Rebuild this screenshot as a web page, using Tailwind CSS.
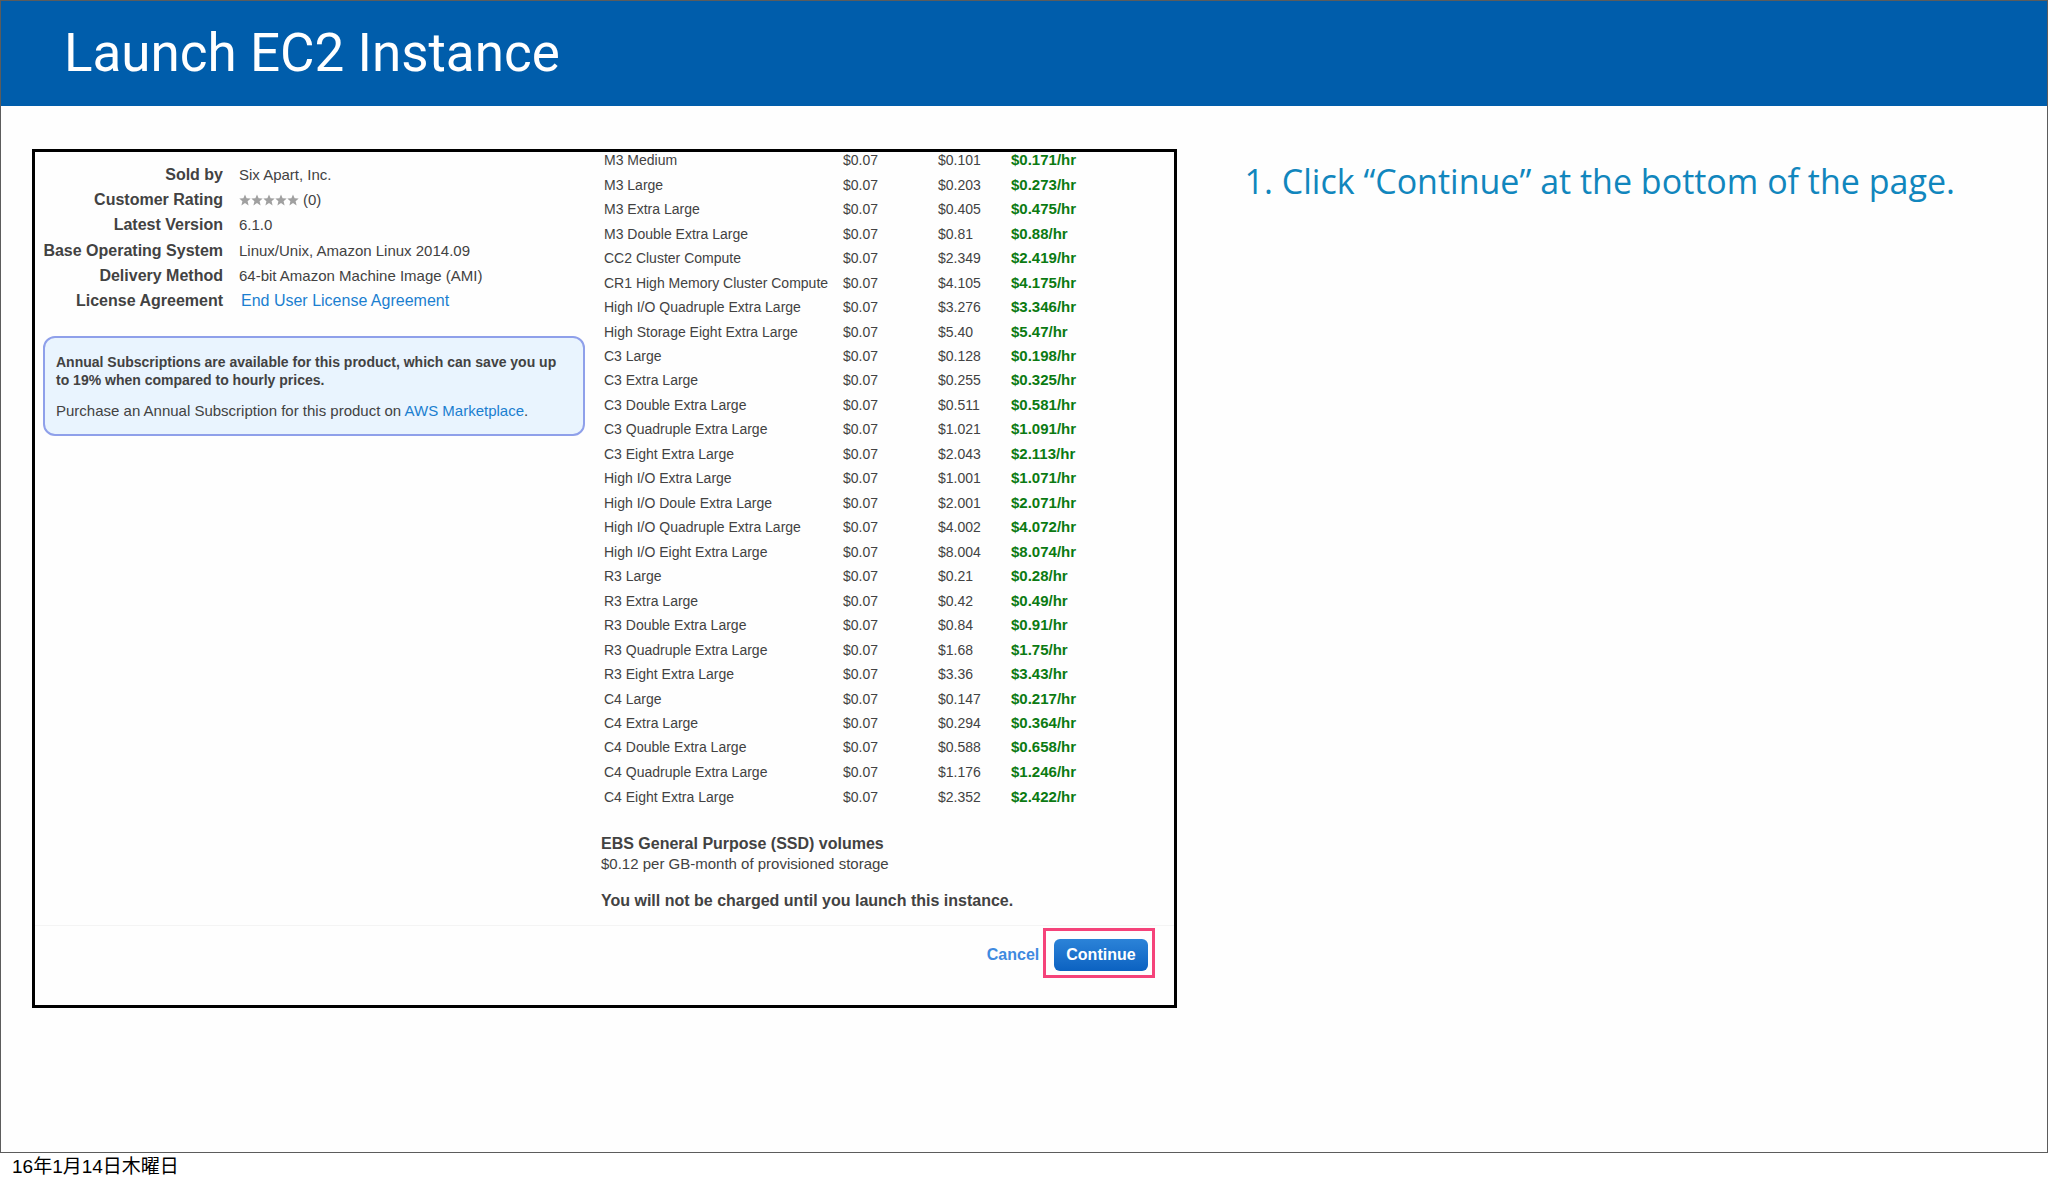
<!DOCTYPE html>
<html lang="ja">
<head>
  <meta charset="UTF-8" />
  <meta name="viewport" content="width=device-width, initial-scale=1.0" />
  <title>Launch EC2 Instance</title>
  <script src="https://cdn.jsdelivr.net/npm/@tailwindcss/browser@4"></script>
</head>
<body class="min-h-screen flex flex-col bg-white text-[#424242] font-['Liberation_Sans',Arial,'Noto_Sans_CJK_JP',sans-serif]">

  <!-- Slide -->
  <div class="flex-1 flex flex-col border border-[#5c5c5c] bg-[#fefefe]">
    <header class="h-[105px] flex items-center px-[63px] bg-[#005dab]">
      <h1 class="text-[53px] leading-none text-white font-[Roboto,sans-serif]">Launch EC2 Instance</h1>
    </header>

    <main class="grid grid-cols-[15fr_11fr] items-start px-[31px] pt-[43px]">

      <!-- Marketplace page -->
      <section class="border-3 border-black overflow-hidden">
        <div class="grid grid-cols-[566px_1fr]">

          <div class="pl-2 pr-4 pt-[10px]">
            <dl class="h-[152px] grid grid-cols-[180px_1fr] gap-x-4 items-center text-[15px] leading-5">
              <dt class="text-base leading-5 font-bold text-right">Sold by</dt>
              <dd>Six Apart, Inc.</dd>
              <dt class="text-base leading-5 font-bold text-right">Customer Rating</dt>
              <dd class="flex items-center gap-1">
                <svg class="w-[60px] h-3 fill-[#a0a0a0]" viewBox="0 0 60 12" role="img" aria-label="0 stars">
                  <defs>
                    <path id="star" d="M6 .4 7.6 4.2 11.7 4.5 8.6 7.2 9.6 11.4 6 9.1 2.4 11.4 3.4 7.2 .3 4.5 4.4 4.2Z" />
                  </defs>
                  <use href="#star" />
                  <use href="#star" x="12" />
                  <use href="#star" x="24" />
                  <use href="#star" x="36" />
                  <use href="#star" x="48" />
                </svg>
                (0)
              </dd>
              <dt class="text-base leading-5 font-bold text-right">Latest Version</dt>
              <dd>6.1.0</dd>
              <dt class="text-base leading-5 font-bold text-right">Base Operating System</dt>
              <dd>Linux/Unix, Amazon Linux 2014.09</dd>
              <dt class="text-base leading-5 font-bold text-right">Delivery Method</dt>
              <dd>64-bit Amazon Machine Image (AMI)</dd>
              <dt class="text-base leading-5 font-bold text-right">License Agreement</dt>
              <dd class="pl-0.5"><a href="#" class="text-base leading-5 text-[#1b7fd0]">End User License Agreement</a></dd>
            </dl>

            <div class="mt-[22px] h-[100px] border-2 border-[#8fa0ea] rounded-xl bg-[#e9f4fe] pl-[11px] pt-[15px]">
              <p class="text-sm leading-[18px] font-bold">Annual Subscriptions are available for this product, which can save you up<br />to 19% when compared to hourly prices.</p>
              <p class="mt-3 text-[15px] leading-5">Purchase an Annual Subscription for this product on <a href="#" class="text-[#1b7fd0]">AWS Marketplace</a>.</p>
            </div>
          </div>

          <div>
            <table class="-mt-1 w-full h-[661px] table-fixed text-sm leading-5 whitespace-nowrap">
              <colgroup>
                <col class="w-[242px]" />
                <col class="w-[95px]" />
                <col class="w-[73px]" />
                <col />
              </colgroup>
              <tbody id="prices"></tbody>
            </table>

            <h2 class="mt-[25px] text-base leading-5 font-bold">EBS General Purpose (SSD) volumes</h2>
            <p class="text-[15px] leading-5">$0.12 per GB-month of provisioned storage</p>
            <p class="mt-[17px] text-base leading-5 font-bold">You will not be charged until you launch this instance.</p>
          </div>
        </div>

        <div class="mt-[14px] border-t border-[#f4f4f4] flex items-center justify-end gap-1 pt-0.5 pr-[19px] pb-[27px]">
          <a href="#" class="pt-1 text-base leading-5 font-bold text-[#3f8ae0]">Cancel</a>
          <div class="border-3 border-[#f5437a] pt-2 pl-2 pr-1 pb-1">
            <button class="block h-8 px-3 rounded-md bg-linear-to-b from-[#2b83d8] to-[#0b62c1] text-base leading-5 font-bold text-white">Continue</button>
          </div>
        </div>
      </section>

      <!-- Instructions -->
      <p class="pl-[68px] pt-2 text-[34px] leading-[48px] text-[#1186bd] font-['Open_Sans',sans-serif] whitespace-nowrap">1. Click “Continue” at the bottom of the page.</p>
    </main>
  </div>

  <footer class="h-[31px] px-3 pb-1 flex items-center text-[19px] leading-none text-black">16年1月14日木曜日</footer>

  <script>
    const prices = [
      ['M3 Medium', '0.101', '0.171'],
      ['M3 Large', '0.203', '0.273'],
      ['M3 Extra Large', '0.405', '0.475'],
      ['M3 Double Extra Large', '0.81', '0.88'],
      ['CC2 Cluster Compute', '2.349', '2.419'],
      ['CR1 High Memory Cluster Compute', '4.105', '4.175'],
      ['High I/O Quadruple Extra Large', '3.276', '3.346'],
      ['High Storage Eight Extra Large', '5.40', '5.47'],
      ['C3 Large', '0.128', '0.198'],
      ['C3 Extra Large', '0.255', '0.325'],
      ['C3 Double Extra Large', '0.511', '0.581'],
      ['C3 Quadruple Extra Large', '1.021', '1.091'],
      ['C3 Eight Extra Large', '2.043', '2.113'],
      ['High I/O Extra Large', '1.001', '1.071'],
      ['High I/O Doule Extra Large', '2.001', '2.071'],
      ['High I/O Quadruple Extra Large', '4.002', '4.072'],
      ['High I/O Eight Extra Large', '8.004', '8.074'],
      ['R3 Large', '0.21', '0.28'],
      ['R3 Extra Large', '0.42', '0.49'],
      ['R3 Double Extra Large', '0.84', '0.91'],
      ['R3 Quadruple Extra Large', '1.68', '1.75'],
      ['R3 Eight Extra Large', '3.36', '3.43'],
      ['C4 Large', '0.147', '0.217'],
      ['C4 Extra Large', '0.294', '0.364'],
      ['C4 Double Extra Large', '0.588', '0.658'],
      ['C4 Quadruple Extra Large', '1.176', '1.246'],
      ['C4 Eight Extra Large', '2.352', '2.422'],
    ];

    document.getElementById('prices').innerHTML = prices.map(([name, ec2, total]) => `
      <tr>
        <td class="pl-[3px]">${name}</td>
        <td>$0.07</td>
        <td>$${ec2}</td>
        <td class="text-[15px] font-bold text-[#0b7a12]">$${total}/hr</td>
      </tr>`).join('');
  </script>

</body>
</html>
